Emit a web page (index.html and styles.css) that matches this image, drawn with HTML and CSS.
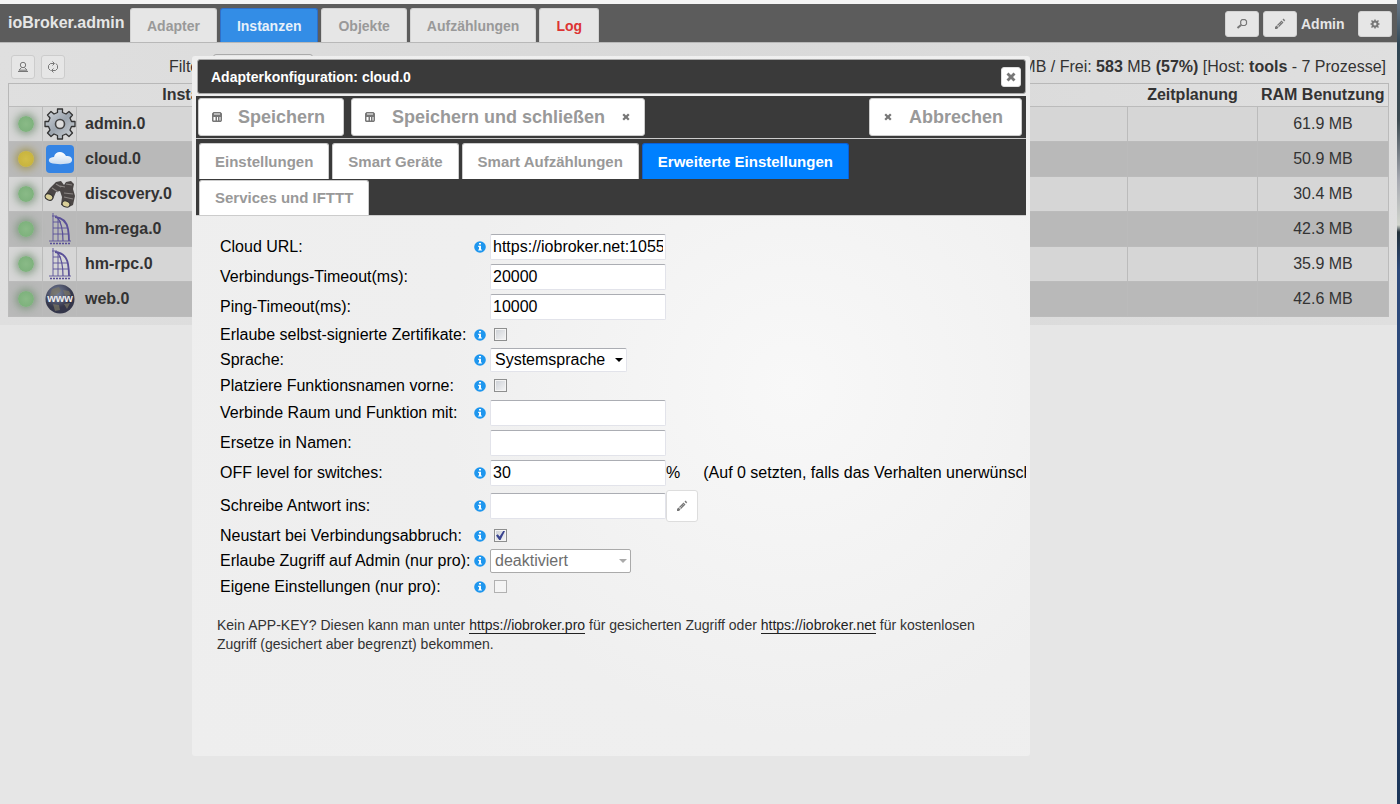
FILE: index.html
```html
<!DOCTYPE html>
<html lang="de">
<head>
<meta charset="utf-8">
<title>ioBroker.admin</title>
<link rel="stylesheet" href="styles.css">
</head>
<body>
<svg class="sprite" aria-hidden="true">
  <defs>
    <symbol id="i-disk" viewBox="0 0 10 10"><path fill-rule="evenodd" d="M1.500 0h7L10 1.500v7L9 10H1L0 9V1.500zM2 1.500v1h6v-1zM1.500 5v3.500h2V5zM5 5v3.500h1V5zM7.500 5v3.500h1V5z"/></symbol>
    <symbol id="i-close" viewBox="0 0 10 10"><path d="M2.500.5 5 3 7.500.5l2 2L7 5l2.500 2.500-2 2L5 7 2.500 9.500l-2-2L3 5 .5 2.500z"/></symbol>
    <symbol id="i-pencil" viewBox="0 0 12 12"><path d="M1 11V9l1.500-1.500 2 2L3 11zM3 7l4.500-4.500 2 2L5 9zM8.500 1.500 9.700.5l.6 1 1 .6-1.100 1.300z"/><path d="m4 8 4-4" stroke="#ddd" stroke-width="1" stroke-dasharray="1 1" fill="none"/></symbol>
    <symbol id="i-search" viewBox="0 0 12 12"><path d="M6 1.600h3l1.500 1.500v3L9 7.500H6L4.700 6.100v-3z" fill="none" stroke="currentColor" stroke-width="1.200"/><path d="M5 7 1.500 10" stroke="currentColor" stroke-width="2"/></symbol>
    <symbol id="i-gear" viewBox="0 0 12 12"><g stroke="currentColor" stroke-width="1.500"><path d="M6 1.500v2M6 8.500v2M1.500 6h2M8.500 6h2M2.500 2.500l1.500 1.500M8 8l1.500 1.500M9.500 2.500 8 4M4 8 2.500 9.500"/></g><circle cx="6" cy="6" r="2.500" fill="none" stroke="currentColor" stroke-width="2"/></symbol>
    <symbol id="i-person" viewBox="0 0 12 12"><g fill="none" stroke="currentColor"><circle cx="6" cy="4" r="2.700"/><path d="M4.500 6.500 2 9.200h8L7.500 6.500M1 10.500h10"/></g></symbol>
    <symbol id="i-refresh" viewBox="0 0 12 12"><g fill="none" stroke="currentColor"><path d="M3.500 9.500 1.500 7.500v-3l2-2H7M5.500.5l2 2-2 2M9 2.500l1.500 2v3l-2 2H5M6.500 7.500l-2 2 2 2"/></g></symbol>
    <symbol id="i-info" viewBox="0 0 12 12"><circle cx="6" cy="6" r="5.800" fill="#1e96ee"/><path fill="#fff" d="M5 2h2v1.600H5zM4.200 4.700H7v3.700h.9v1.200H4.200V8.400H5V5.900h-.8z"/></symbol>
    <symbol id="i-arrow" viewBox="0 0 8 4"><path d="M0 0h8L4 4z"/></symbol>
    <symbol id="i-sail" viewBox="0 0 32 32"><g fill="none" stroke="#5a5098"><path stroke-width="1.800" d="M11 4q11 1 13 12 1 6 1 12"/><path stroke-width="1.200" d="M13 4q6 7 6 24"/><path stroke-width=".9" d="M9 0v28M8 3h5M9 9h8M9 15h14M9 21h15M14 5v23M5 28h22"/><path stroke-width="1.400" stroke-dasharray="2 1" d="M6 30.500h20"/></g></symbol>
    <linearGradient id="steel" x2="1" y2="1"><stop stop-color="#d5d9de"/><stop offset=".5" stop-color="#9ca5af"/><stop offset="1" stop-color="#d3d7da"/></linearGradient>
    <linearGradient id="mist" x2="0" y2="1"><stop stop-color="#fff"/><stop offset="1" stop-color="#cbdcf0"/></linearGradient>
    <radialGradient id="earth" cx=".4" cy=".3"><stop stop-color="#77839a"/><stop offset=".7" stop-color="#4b4f66"/><stop offset="1" stop-color="#34364a"/></radialGradient>
  </defs>
</svg>

<div class="page">
  <header class="topbar">
    <span class="brand">ioBroker.admin</span>
    <nav class="tabs">
      <button class="tab">Adapter</button>
      <button class="tab tab-active">Instanzen</button>
      <button class="tab">Objekte</button>
      <button class="tab">Aufzählungen</button>
      <button class="tab tab-alert">Log</button>
    </nav>
    <div class="tools">
      <button class="tool" aria-label="Suchen"><svg class="icon"><use href="#i-search"/></svg></button>
      <button class="tool" aria-label="Bearbeiten"><svg class="icon"><use href="#i-pencil"/></svg></button>
      <span class="user">Admin</span>
      <button class="tool" aria-label="Einstellungen"><svg class="icon"><use href="#i-gear"/></svg></button>
    </div>
  </header>

  <main class="content">
    <div class="filterbar">
      <button class="mini" aria-label="Benutzer"><svg class="icon"><use href="#i-person"/></svg></button>
      <button class="mini" aria-label="Aktualisieren"><svg class="icon"><use href="#i-refresh"/></svg></button>
      <label class="filter">Filter:<input class="filter-input" type="text"></label>
      <span class="host">MB / Frei: <b>583</b> MB <b>(57%)</b> [Host: <b>tools</b> - 7 Prozesse]</span>
    </div>
    <table class="instances">
      <colgroup><col class="c-icon"><col class="c-icon"><col class="c-name"><col><col class="c-plan"><col class="c-ram"></colgroup>
      <thead><tr><th colspan="3">Instanz</th><th></th><th>Zeitplanung</th><th>RAM Benutzung</th></tr></thead>
      <tbody>
        <tr><td><i class="led"></i></td><td><svg class="logo" viewBox="0 0 32 32"><path fill="url(#steel)" stroke="#333" stroke-width="1.300" stroke-linejoin="round" d="M13.500 1h5v3.500L22 6l3-2.500L28.500 7 26 10l1.500 3.500H31v5h-3.500L26 22l2.500 3-3.500 3.500-3-2.500-3.500 1.500V31h-5v-3.500L10 26l-3 2.500L3.500 25 6 22l-1.500-3.500H1v-5h3.500L6 10 3.500 7 7 3.500 10 6l3.500-1.500z"/><circle cx="16" cy="16" r="4.500" fill="#ddd" stroke="#444" stroke-width="1.600"/></svg></td><td>admin.0</td><td></td><td></td><td>61.9 MB</td></tr>
        <tr><td><i class="led led-warn"></i></td><td><svg class="logo" viewBox="0 0 32 32"><rect x="2" y="2" width="28" height="28" rx="4" fill="#3584e4"/><path fill="url(#mist)" d="M7 20c-4-2-2-6 3-6 1-6 9-7 12-1 6-1 8 5 4 7-4 1.500-15 1.500-19 0z"/></svg></td><td>cloud.0</td><td></td><td></td><td>50.9 MB</td></tr>
        <tr><td><i class="led"></i></td><td><svg class="logo" viewBox="0 0 32 32"><path fill="#4b4645" d="m1 17 5-7 6-6 5-1 3 4 2-3 5-1 3 3-1 5 2 7-2 9-4 2-8-2 1-8-2-6-4 1-3 7-3 1z"/><path stroke="#8a8583" stroke-width="1.200" fill="none" d="m12 6 5 3M8 10l6 4M22 6l6 1M20 15l9 1M20 19l9 2M16 8l5 1"/><ellipse cx="5" cy="19" rx="4" ry="3" fill="#d9cf98" stroke="#333" transform="rotate(25 5 19)"/><ellipse cx="22" cy="26" rx="4" ry="3" fill="#d9cf98" stroke="#333" transform="rotate(20 22 26)"/></svg></td><td>discovery.0</td><td></td><td></td><td>30.4 MB</td></tr>
        <tr><td><i class="led"></i></td><td><svg class="logo"><use href="#i-sail"/></svg></td><td>hm-rega.0</td><td></td><td></td><td>42.3 MB</td></tr>
        <tr><td><i class="led"></i></td><td><svg class="logo"><use href="#i-sail"/></svg></td><td>hm-rpc.0</td><td></td><td></td><td>35.9 MB</td></tr>
        <tr><td><i class="led"></i></td><td><svg class="logo" viewBox="0 0 32 32"><circle cx="16" cy="16" r="14.500" fill="url(#earth)"/><path fill="#7b7664" opacity=".7" d="m8 6 7-2 2 4-5 4-6 1zM19 7l6 1 2 4-6 1zM9 21l6 1 1 5-5 1zM20 21l6-1-3 6z"/><text class="globe-text" x="16" y="19" text-anchor="middle">www</text></svg></td><td>web.0</td><td></td><td></td><td>42.6 MB</td></tr>
      </tbody>
    </table>
  </main>
</div>
<div class="desktop-edge"></div>

<section class="dialog" role="dialog" aria-labelledby="dialog-title">
  <div class="titlebar">
    <span id="dialog-title">Adapterkonfiguration: cloud.0</span>
    <button class="title-close" aria-label="Schließen"><svg class="icon icon-sm"><use href="#i-close"/></svg></button>
  </div>
  <div class="actions">
    <button class="action"><svg class="icon icon-sm"><use href="#i-disk"/></svg><span>Speichern</span></button>
    <button class="action action-wide"><svg class="icon icon-sm"><use href="#i-disk"/></svg><span>Speichern und schließen</span><svg class="icon icon-x"><use href="#i-close"/></svg></button>
    <button class="action action-end"><svg class="icon icon-x"><use href="#i-close"/></svg><span>Abbrechen</span></button>
  </div>
  <nav class="subtabs">
    <button class="subtab">Einstellungen</button>
    <button class="subtab">Smart Geräte</button>
    <button class="subtab">Smart Aufzählungen</button>
    <button class="subtab subtab-active">Erweiterte Einstellungen</button>
    <button class="subtab">Services und IFTTT</button>
  </nav>
  <form class="form">
    <div class="row"><label for="url">Cloud URL:</label><svg class="info"><use href="#i-info"/></svg><input class="text" id="url" type="text" value="https://iobroker.net:10555"></div>
    <div class="row"><label for="timeout">Verbindungs-Timeout(ms):</label><span></span><input class="text" id="timeout" type="text" value="20000"></div>
    <div class="row"><label for="ping">Ping-Timeout(ms):</label><span></span><input class="text" id="ping" type="text" value="10000"></div>
    <div class="row row-check"><label for="cert">Erlaube selbst-signierte Zertifikate:</label><svg class="info"><use href="#i-info"/></svg><input class="check" id="cert" type="checkbox"></div>
    <div class="row row-select"><label for="lang">Sprache:</label><svg class="info"><use href="#i-info"/></svg><span class="select"><select id="lang"><option>Systemsprache</option></select><svg class="arrow"><use href="#i-arrow"/></svg></span></div>
    <div class="row row-check"><label for="front">Platziere Funktionsnamen vorne:</label><svg class="info"><use href="#i-info"/></svg><input class="check" id="front" type="checkbox"></div>
    <div class="row"><label for="join">Verbinde Raum und Funktion mit:</label><svg class="info"><use href="#i-info"/></svg><input class="text" id="join" type="text"></div>
    <div class="row"><label for="replace">Ersetze in Namen:</label><span></span><input class="text" id="replace" type="text"></div>
    <div class="row"><label for="off">OFF level for switches:</label><svg class="info"><use href="#i-info"/></svg><span class="field"><input class="text" id="off" type="text" value="30"><span>%</span><span class="hint">(Auf 0 setzten, falls das Verhalten unerwünscht ist)</span></span></div>
    <div class="row row-tall"><label for="answer">Schreibe Antwort ins:</label><svg class="info"><use href="#i-info"/></svg><span class="field"><input class="text" id="answer" type="text"><button class="pick" type="button" aria-label="Auswählen"><svg class="icon"><use href="#i-pencil"/></svg></button></span></div>
    <div class="row row-check"><label for="restart">Neustart bei Verbindungsabbruch:</label><svg class="info"><use href="#i-info"/></svg><input class="check" id="restart" type="checkbox" checked></div>
    <div class="row row-select"><label for="access">Erlaube Zugriff auf Admin (nur pro):</label><svg class="info"><use href="#i-info"/></svg><span class="select select-off"><select id="access" disabled><option>deaktiviert</option></select><svg class="arrow"><use href="#i-arrow"/></svg></span></div>
    <div class="row row-check"><label for="own">Eigene Einstellungen (nur pro):</label><svg class="info"><use href="#i-info"/></svg><input class="check" id="own" type="checkbox" disabled></div>
  </form>
  <p class="note">Kein APP-KEY? Diesen kann man unter <a href="#pro">https://iobroker.pro</a> für gesicherten Zugriff oder <a href="#net">https://iobroker.net</a> für kostenlosen Zugriff (gesichert aber begrenzt) bekommen.</p>
</section>
</body>
</html>
```

FILE: styles.css
```css
* { box-sizing: border-box; }

body {
  margin: 0;
  min-height: 100vh;
  display: flex;
  background: #e6e6e6;
  color: #333;
  font: 16px/20px "Liberation Sans", Arial, sans-serif;
  overflow: hidden;
}

button, input, select { font: inherit; color: inherit; margin: 0; }

.sprite { position: absolute; width: 0; height: 0; }
.page { flex: 1; min-width: 0; }

.desktop-edge {
  width: 3px;
  background: linear-gradient(#6b7b8a 0, #2f4655 45px, #3c4a50 120px, #a5a8b0 180px, #d0d4cc 225px, #23313a 232px, #2c4a7c 270px, #2c4a7c 500px, #1d3558 100%);
}

.topbar {
  display: flex;
  align-items: flex-end;
  height: 43px;
  border-top: 4px solid #f4f4f4;
  border-bottom: 1px solid #b8b8b8;
  background: #5c5c5c;
}

.brand {
  width: 130px;
  padding-left: 8px;
  align-self: center;
  color: #e6e6e6;
  font-weight: bold;
}

.tabs { display: flex; gap: 3px; }

.tab {
  height: 34px;
  padding: 0 16px;
  border: 1px solid #d3d3d3;
  border-bottom: 0;
  border-radius: 3px 3px 0 0;
  background: #e6e6e6;
  color: #999;
  font-size: 14px;
  font-weight: bold;
}
.tab-active { background: #338de6; border-color: #2f6fc8; color: #e6f0fa; }
.tab-alert { color: #d33; }

.tools {
  display: flex;
  align-items: center;
  align-self: center;
  gap: 4px;
  margin-left: auto;
  padding: 2px 5px 0 0;
}
.tool {
  display: flex;
  align-items: center;
  justify-content: center;
  width: 34px;
  height: 26px;
  padding: 0;
  border: 1px solid #d3d3d3;
  border-radius: 3px;
  background: #e6e6e6;
  color: #777;
}
.user { width: 53px; color: #e6e6e6; font-size: 14px; font-weight: bold; }

.icon { width: 12px; height: 12px; fill: currentColor; color: #777; flex: none; }
.icon-sm { width: 10px; height: 10px; }
.icon-x { width: 8px; height: 8px; }

.content {
  padding: 11px 8px 8px;
  background: radial-gradient(circle at 50% 50%, #d8d8d8, #dfdfdf);
}

.filterbar { display: flex; align-items: center; height: 26px; margin-bottom: 3px; padding-left: 3px; }
.mini {
  display: flex;
  align-items: center;
  justify-content: center;
  width: 24px;
  height: 24px;
  margin-right: 6px;
  padding: 0;
  border: 1px solid #ccc;
  border-radius: 3px;
  background: #e6e6e6;
}
.filter { display: flex; align-items: center; gap: 4px; margin-left: 98px; }
.filter-input { width: 100px; height: 26px; border: 1px solid #aaa; border-radius: 3px; background: #e6e6e6; }
.host { margin-left: auto; padding-right: 3px; }

.instances {
  width: 100%;
  table-layout: fixed;
  border-collapse: collapse;
  border: 1px solid #b8b8b8;
}
.c-icon { width: 34px; }
.c-name { width: 294px; }
.c-plan { width: 130px; }
.c-ram { width: 131px; }
.instances th { height: 23px; padding: 0; border-bottom: 1px solid #bbb; }
.instances td { height: 35px; padding: 0; border: 1px solid #bbb; text-align: center; }
.instances td:nth-child(3) { padding-left: 8px; text-align: left; font-weight: bold; }
.instances tr { background: #d6d6d6; }
.instances thead tr { background: transparent; }
.instances tbody tr:nth-child(even) { background: #b9b9b9; }

.led {
  display: block;
  width: 16px;
  height: 16px;
  margin: 0 auto;
  border-radius: 50%;
  background: radial-gradient(#8aba87, #78ae78);
  box-shadow: 0 0 8px 2px #7c967c;
}
.led-warn { background: radial-gradient(#d2be48, #c4b03a); box-shadow: 0 0 8px 2px #a09448; }
.logo { display: block; width: 32px; height: 32px; margin: 0 auto; }
.globe-text { fill: #eee; font-size: 11px; font-weight: bold; }

.dialog {
  position: absolute;
  left: 192px;
  top: 56px;
  width: 838px;
  height: 700px;
  padding: 3px 4px 4px;
  border-radius: 3px;
  background: radial-gradient(circle at 600px 330px, #f8f8f8, #efefef 350px, #eee);
  color: #000;
}

.titlebar {
  display: flex;
  align-items: center;
  justify-content: space-between;
  height: 35px;
  margin: 0 0 2px 1px;
  padding: 0 4px 0 13px;
  border: 1px solid #aaa;
  border-radius: 3px;
  background: #3a3a3a;
  color: #fff;
  font-size: 14px;
  font-weight: bold;
}
.title-close {
  display: flex;
  align-items: center;
  justify-content: center;
  width: 20px;
  height: 20px;
  padding: 0;
  border: 1px solid #ddd;
  border-radius: 3px;
  background: #fff;
}

.actions {
  display: flex;
  gap: 7px;
  padding: 2px 4px 2px 2px;
  border-bottom: 1px solid #ccc;
  background: #3a3a3a;
}
.action {
  display: flex;
  align-items: center;
  gap: 16px;
  height: 38px;
  padding: 0 18px 0 13px;
  border: 1px solid #ccc;
  border-radius: 3px;
  background: #fff;
  color: #999;
  font-size: 18px;
  font-weight: bold;
}
.action-wide { gap: 17px; padding-right: 14px; }
.action-end { gap: 17px; padding-left: 14px; margin-left: auto; }

.subtabs {
  display: flex;
  flex-wrap: wrap;
  gap: 1px 3px;
  padding: 4px 24px 0 3px;
  border-bottom: 1px solid #ccc;
  background: #3a3a3a;
}
.subtab {
  height: 36px;
  padding: 0 15px;
  border: 1px solid #ccc;
  border-bottom: 0;
  border-radius: 3px 3px 0 0;
  background: #fff;
  color: #999;
  font-size: 15px;
  font-weight: bold;
}
.subtab:last-child { height: 35px; }
.subtab-active { background: #0080ff; border-color: #0a5fd8; color: #fff; }

.form { padding: 16px 0 0 24px; }
.row {
  display: grid;
  grid-template-columns: 254px 16px 1fr;
  align-items: center;
  height: 30px;
  white-space: nowrap;
}
.row-check { height: 25px; }
.row-select { height: 26px; }
.row-tall { height: 35px; }
.info { width: 12px; height: 12px; }

.text {
  flex: none;
  width: 176px;
  height: 26px;
  padding: 1px 2px;
  border: 1px solid #e2e3ea;
  border-top-color: #abadb3;
  border-radius: 2px;
  background: #fff;
}
.field { display: flex; align-items: center; min-width: 0; overflow: hidden; }
.hint { margin-left: 23px; }
.pick {
  display: flex;
  align-items: center;
  justify-content: center;
  width: 32px;
  height: 32px;
  padding: 0;
  border: 1px solid #ddd;
  border-radius: 3px;
  background: #fff;
}

.select { display: inline-grid; justify-self: start; align-items: center; }
.select select {
  grid-area: 1 / 1;
  appearance: none;
  width: 137px;
  height: 24px;
  padding: 0 4px;
  border: 1px solid #e2e3ea;
  border-top-color: #abadb3;
  border-radius: 2px;
  background: #fff;
}
.arrow { grid-area: 1 / 1; justify-self: end; width: 8px; height: 4px; margin-right: 4px; pointer-events: none; }
.select-off select { width: 141px; border-color: #aaa; color: #6d6d6d; opacity: 1; }
.select-off .arrow { fill: #aaa; }

.check {
  display: grid;
  place-items: center;
  appearance: none;
  width: 13px;
  height: 13px;
  margin-left: 4px;
  border: 1px solid #8e8f8f;
  background: linear-gradient(135deg, #cbcfd5, #f6f6f6);
  box-shadow: inset 0 0 0 1px #f4f4f4;
}
.check:disabled { border-color: #b1b1b1; background: #f4f4f4; }
.check:checked::before {
  content: "";
  width: 9px;
  height: 9px;
  background: #3a4490;
  clip-path: polygon(0 50%, 20% 35%, 40% 60%, 80% 0, 100% 0, 50% 100%, 35% 100%);
}

.note {
  margin: 17px 20px 0 21px;
  color: #333;
  font-size: 14px;
  line-height: 19px;
}
.note a { color: #222; text-decoration: none; border-bottom: 1px solid #222; }
```
